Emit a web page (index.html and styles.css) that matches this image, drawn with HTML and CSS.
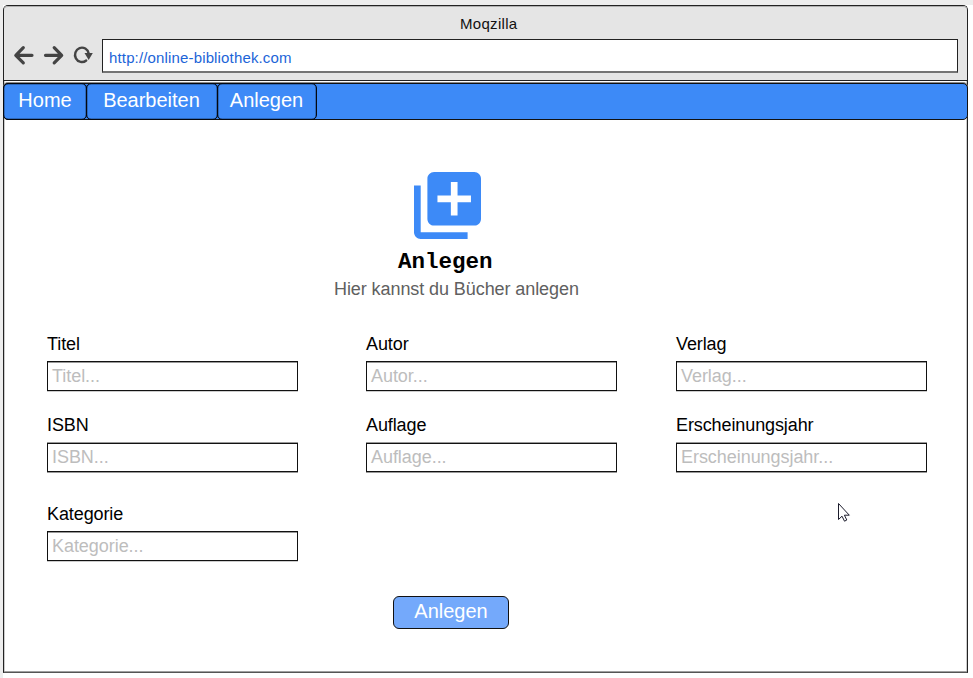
FILE: index.html
```
<!DOCTYPE html>
<html lang="de">
<head>
<meta charset="utf-8">
<title>Online-Bibliothek</title>
<link rel="stylesheet" href="styles.css">
</head>
<body>
<div class="window">
  <header class="chrome">
    <div class="title"><span>Moqzilla</span></div>
    <div class="toolbar">
      <svg class="controls" width="98" height="34" viewBox="4 39 98 34" fill="none" stroke="#444" stroke-linejoin="round" stroke-linecap="round">
        <path d="M32 55.300H16.500M23.300 47.700L15.800 55.300L23.300 62.800" stroke-width="3.200"/>
        <path d="M45.500 55.300H61M54.200 47.700L61.700 55.300L54.200 62.800" stroke-width="3.200"/>
        <path d="M86.200 60.500A6.900 7.200 0 1 1 88.700 53.500" stroke-width="2.400"/>
        <path d="M84.500 53H92.800L88.700 60Z" fill="#444" stroke="none"/>
      </svg>
      <div class="url"><span>http://online-bibliothek.com</span></div>
    </div>
  </header>
  <nav class="nav">
    <a class="tab home">Home</a>
    <a class="tab edit">Bearbeiten</a>
    <a class="tab create">Anlegen</a>
  </nav>
  <main class="page">
    <section class="hero">
      <svg class="hero-icon" width="67" height="67" viewBox="2 2 20 20" fill="#3d8af7">
        <path d="M4 6H2v14c0 1.100.9 2 2 2h14v-2H4V6z"/>
        <path d="M20 2H8c-1.100 0-2 .9-2 2v12c0 1.100.9 2 2 2h12c1.100 0 2-.9 2-2V4c0-1.100-.9-2-2-2zm-1 9h-4v4h-2v-4H9V9h4V5h2v4h4v2z"/>
      </svg>
      <h1>Anlegen</h1>
      <p>Hier kannst du Bücher anlegen</p>
    </section>
    <form class="form">
      <label class="field">Titel<span class="box">Titel...</span></label>
      <label class="field">Autor<span class="box">Autor...</span></label>
      <label class="field">Verlag<span class="box">Verlag...</span></label>
      <label class="field mid">ISBN<span class="box">ISBN...</span></label>
      <label class="field mid">Auflage<span class="box">Auflage...</span></label>
      <label class="field mid">Erscheinungsjahr<span class="box">Erscheinungsjahr...</span></label>
      <label class="field">Kategorie<span class="box">Kategorie...</span></label>
    </form>
    <button class="submit" type="button">Anlegen</button>
  </main>
  <svg class="cursor" width="14" height="21" viewBox="0 0 14 21" fill="#fff" stroke="#1c1c2c">
    <path d="M1.500 1.500V17.500L5 14.200L7.500 19.200L9.800 18L7.400 13.200H12.300Z"/>
  </svg>
</div>
</body>
</html>
```
FILE: styles.css
```
* { box-sizing: border-box; }
body {
  margin: 0;
  height: 678px;
  padding: 5px 0 0 3px;
  overflow: hidden;
  background: linear-gradient(#ededed, #ededed) 0 0 / 100% 5px no-repeat,
    linear-gradient(#ededed, #ededed) 0 0 / 3px 100% no-repeat, #fff;
  font-family: "Liberation Sans", Arial, sans-serif;
}
.window {
  position: relative;
  width: 965px;
  height: 668px;
  border: 1px solid #222;
  border-bottom-color: #555;
  border-radius: 5px 5px 0 0;
  box-shadow: inset 0 -1px #a0a0a0, inset -1px 0 #ccc, inset 1px 0 #ccc;
}
.chrome {
  height: 75px;
  border-bottom: 1px solid #222;
  border-radius: 4px 4px 0 0;
  background: #e5e5e5;
  box-shadow: inset 0 1px #b0b0b0;
}
.title {
  height: 33px;
  padding-left: 456px;
  font-size: 15px;
  line-height: 35px;
  letter-spacing: .3px;
  color: #111;
}
.toolbar { display: flex; }
.url {
  width: 856px;
  height: 34px;
  padding-left: 6px;
  border: 1px solid #222;
  border-bottom: 2px solid #747474;
  background: #fff;
  color: #1c64d8;
  font-size: 15px;
  line-height: 36px;
  letter-spacing: .15px;
}
.nav {
  display: flex;
  width: 965px;
  height: 37px;
  margin: 2px 0 0 -1px;
  border: 1px solid #111;
  border-radius: 5px;
  background: #3d8af7;
  box-shadow: 0 -1px #888;
}
.tab {
  height: 37px;
  margin: -1px 0 0 -1px;
  border: 1px solid #04080f;
  border-radius: 5px;
  box-shadow: inset 0 0 0 .5px #1f4680;
  color: #fff;
  font-size: 20px;
  line-height: 32px;
  text-align: center;
}
.home { width: 84px; }
.edit { width: 132px; padding-right: 1px; }
.create { width: 100px; padding-right: 1px; }
.page { display: flex; flex-direction: column; }
.hero {
  display: flex;
  flex-direction: column;
  align-items: flex-start;
  padding-top: 52px;
}
.hero-icon { margin-left: 410px; }
h1 {
  margin: 10px 0 0 394px;
  font: bold 22.500px/26px "Liberation Mono", monospace;
}
p {
  margin: 3px 0 0 330px;
  color: #606060;
  font-size: 18px;
  line-height: 22px;
  letter-spacing: -.08px;
}
.form {
  display: grid;
  grid-template-columns: 319px 310px 252px;
  grid-template-rows: 81px 89px 60px;
  justify-content: start;
  margin: 33px 0 0 43px;
}
.field {
  width: 251px;
  color: #000;
  font-size: 18px;
  line-height: 22px;
  letter-spacing: -.1px;
}
.box {
  display: block;
  height: 30px;
  margin-top: 6px;
  padding-left: 4px;
  border: 1px solid #111;
  box-shadow: inset 0 1px #999, 0 1px #ccc;
  color: #bdbdbd;
  line-height: 28px;
  letter-spacing: -.05px;
}
.mid .box {
  height: 29px;
  margin-top: 7px;
  line-height: 26px;
  box-shadow: 0 1px #999, 0 -1px #999;
}
.submit {
  width: 116px;
  height: 33px;
  margin: 33px 0 0 389px;
  padding: 0 0 3px;
  border: 1px solid #111;
  border-radius: 6px;
  background: #74a9fb;
  color: #fff;
  font: 20px "Liberation Sans", Arial, sans-serif;
}
.cursor {
  position: absolute;
  left: 833px;
  top: 496px;
}
```
